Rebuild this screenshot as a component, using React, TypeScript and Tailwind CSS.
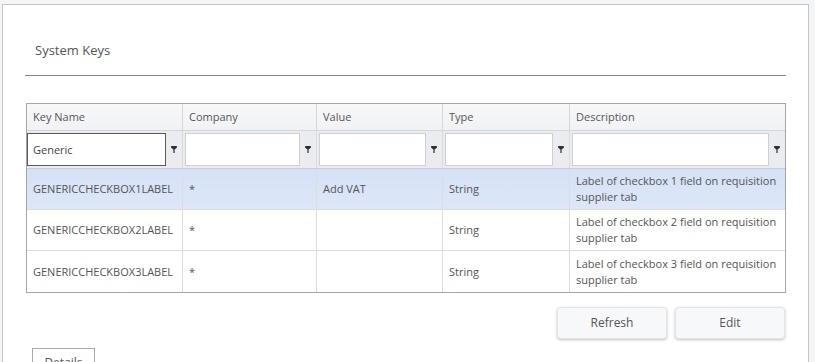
import React from 'react';

const COLS = [
  { key: 'name', label: 'Key Name', w: 'w-[156px]' },
  { key: 'company', label: 'Company', w: 'w-[134px]' },
  { key: 'value', label: 'Value', w: 'w-[126px]' },
  { key: 'type', label: 'Type', w: 'w-[127px]' },
  { key: 'desc', label: 'Description', w: 'w-[215px]' },
];

const ROWS = [
  { name: 'GENERICCHECKBOX1LABEL', company: '*', value: 'Add VAT', type: 'String', desc: 'Label of checkbox 1 field on requisition supplier tab' },
  { name: 'GENERICCHECKBOX2LABEL', company: '*', value: '', type: 'String', desc: 'Label of checkbox 2 field on requisition supplier tab' },
  { name: 'GENERICCHECKBOX3LABEL', company: '*', value: '', type: 'String', desc: 'Label of checkbox 3 field on requisition supplier tab' },
];

// petit entonnoir du filtre
function FilterIcon() {
  return (
    <svg width="6" height="7" viewBox="0 0 6 7" className="text-[#2f2f2f]">
      <path d="M0 0.8 Q0 0 0.8 0 H5.2 Q6 0 6 0.8 V1.4 L3.6 3.6 V7 H2.4 V3.6 L0 1.4 Z" fill="currentColor" />
    </svg>
  );
}

function Button({ label }: { label: string }) {
  return (
    <button className="w-[110px] h-[32px] rounded-[4px] border border-[#e4e5e8] bg-[#f7f8fa] text-[12px] text-[#555] shadow-[0_1px_3px_rgba(0,0,0,0.25)]">
      {label}
    </button>
  );
}

export default function App() {
  const font = { fontFamily: '"Open Sans", "Liberation Sans", sans-serif' };
  return (
    <div className="w-[815px] h-[362px] overflow-hidden bg-[#f4f5f7] pt-[4px] pl-[2px]" style={font}>
      <div className="w-[807px] h-[420px] border border-[#c4c4c6] bg-white px-[22px] pt-[36px]">
        {/* Titre */}
        <div className="pl-[10px] text-[13px] leading-[18px] text-[#555]">System Keys</div>
        <div className="mt-[16px] h-px bg-[#868686]" />

        {/* Grille */}
        <div className="mt-[27px] ml-px w-[760px] border border-[#a4a6ac] text-[11px] text-[#555]">
          <div className="flex h-[27px] border-b border-[#d4d6da] bg-gradient-to-b from-[#f8f8f9] to-[#f1f2f4]">
            {COLS.map((c, i) => (
              <div
                key={c.key}
                className={`${c.w} flex items-center pl-[6px] ${i < 4 ? 'border-r border-[#d4d6da]' : ''}`}
              >
                {c.label}
              </div>
            ))}
          </div>
          <div className="flex h-[38px] border-b border-[#c9ccd2] bg-[#ebecef]">
            {COLS.map((c, i) => (
              <div
                key={c.key}
                className={`${c.w} flex items-center ${i === 0 ? 'pl-0' : 'pl-[2px]'} ${i < 4 ? 'border-r border-[#d9dbdf]' : ''}`}
              >
                <input
                  readOnly
                  value={i === 0 ? 'Generic' : ''}
                  className={`flex-1 min-w-0 h-[33px] bg-white px-[5px] text-[11px] text-[#444] outline-none border ${
                    i === 0 ? 'border-[#5a5a5a]' : 'border-[#cfd0d4]'
                  }`}
                  style={font}
                />
                <div className="w-[16px] flex justify-center">
                  <FilterIcon />
                </div>
              </div>
            ))}
          </div>
          {ROWS.map((r, ri) => (
            <div
              key={r.name}
              className={`flex h-[41px] ${ri < ROWS.length - 1 ? 'border-b border-[#dcdde0]' : ''} ${
                ri === 0 ? 'bg-gradient-to-b from-[#d5e1f6] to-[#dde7f8]' : 'bg-white'
              }`}
            >
              {COLS.map((c, i) => (
                <div
                  key={c.key}
                  className={`${c.w} flex items-center pl-[6px] pr-[4px] leading-[16px] ${
                    i < 4 ? 'border-r border-[#dcdde0]' : ''
                  }`}
                >
                  {(r as any)[c.key]}
                </div>
              ))}
            </div>
          ))}
        </div>

        {/* Actions */}
        <div className="mt-[14px] flex justify-end gap-[8px] w-[760px]">
          <Button label="Refresh" />
          <Button label="Edit" />
        </div>

        <div className="mt-[9px] ml-[7px] w-[63px] h-[30px] border border-[#a9a9a9] bg-white pt-[5px] text-center text-[12px] leading-[18px] text-[#555]">
          Details
        </div>
      </div>
    </div>
  );
}
